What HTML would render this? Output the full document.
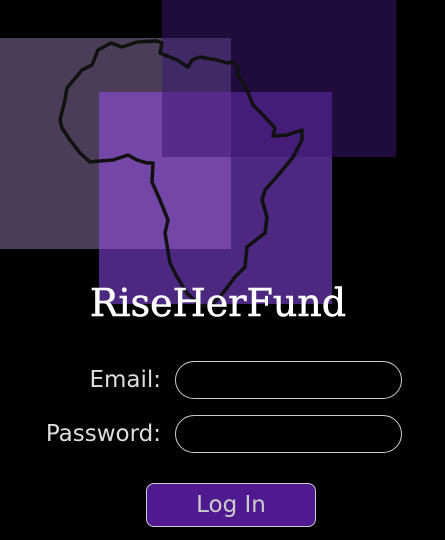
<!DOCTYPE html>
<html><head><style>
body{margin:0;width:445px;height:540px;background:#000;position:relative;overflow:hidden;font-family:"DejaVu Sans","Liberation Sans",sans-serif}
.r{position:absolute}
.lbl{position:absolute;right:284px;color:#ddd;font-size:23px;line-height:26px}
.inp{position:absolute;left:175px;width:225px;height:36px;border:1px solid #ccc;border-radius:19px}
</style></head><body>
<div class="r" style="left:162px;top:0;width:234px;height:157px;background:#200b3d"></div>
<div class="r" style="left:0;top:38px;width:231px;height:211px;background:#4a3d57"></div>
<div class="r" style="left:162px;top:38px;width:69px;height:119px;background:#412966"></div>
<div class="r" style="left:99px;top:92px;width:233px;height:212px;background:#4c2880"></div>
<div class="r" style="left:99px;top:92px;width:132px;height:157px;background:#7346a8"></div>
<div class="r" style="left:162px;top:92px;width:170px;height:65px;background:#441d78"></div>
<div class="r" style="left:162px;top:92px;width:69px;height:65px;background:#562b8c"></div>
<svg class="r" style="left:0;top:0" width="445" height="540">
<path d="M111,43 L122,47 L137,42 L157,41 L162,43 L160,53 L177,60 L188,67 L192,60 L200,57 L217,60 L227,63 L233,62 L238,67 L238,75 L247,90 L253,105 L263,115 L275,128 L273,136 L287,135 L302,130 L302,140 L293,157 L280,173 L265,190 L262,200 L267,217 L265,233 L247,247 L245,267 L235,277 L223,293 L212,305 L200,306 L187,293 L177,277 L170,263 L165,233 L168,220 L160,200 L152,182 L153,163 L147,163 L137,160 L128,155 L113,160 L100,161 L90,162 L80,153 L70,140 L62,128 L60,120 L65,100 L67,88 L82,70 L92,65 L98,50 Z" fill="none" stroke="#111" stroke-width="3.5" stroke-linejoin="round"/>
</svg>
<div class="r" style="left:0;width:436px;top:280px;text-align:center;color:#fff;font-family:'DejaVu Serif',serif;font-size:38px;line-height:46px;-webkit-text-stroke:0.6px #fff">RiseHerFund</div>
<div class="lbl" style="top:367px">Email:</div>
<div class="inp" style="top:361px"></div>
<div class="lbl" style="top:421px">Password:</div>
<div class="inp" style="top:415px"></div>
<div class="r" style="left:146px;top:483px;width:168px;height:42px;background:#4f1a8f;border:1px solid #ccc;border-radius:8px;color:#ccc;font-size:23px;line-height:42px;text-align:center">Log In</div>
</body></html>
